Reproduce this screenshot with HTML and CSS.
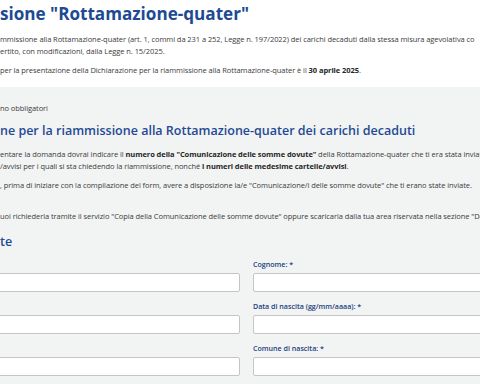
FILE: index.html
```html
<!DOCTYPE html>
<html lang="it">
<head>
    <meta charset="utf-8">
    <title>Dichiarazione di riammissione "Rottamazione-quater"</title>
    <meta name="viewport" content="width=device-width, initial-scale=1.0">
    <link rel="stylesheet" href="styles.css">
</head>
<body>
    <!-- intestazione -->
    <div class="intro">
        <h1 class="title">sione "Rottamazione-quater"</h1>
        <p class="text">mmissione alla Rottamazione-quater (art. 1, commi da 231 a 252, Legge n. 197/2022) dei carichi decaduti dalla stessa misura agevolativa co<br>ertito, con modificazioni, dalla Legge n. 15/2025.</p>
        <p class="text gap_s">per la presentazione della Dichiarazione per la riammissione alla Rottamazione-quater è il <strong>30 aprile 2025</strong>.</p>
    </div>

    <!-- modulo -->
    <div class="panel">
        <p class="text">no obbligatori</p>
        <h2 class="panel_title">ne per la riammissione alla Rottamazione-quater dei carichi decaduti</h2>
        <p class="text gap_m">entare la domanda dovrai indicare il <strong>numero della "Comunicazione delle somme dovute"</strong> della Rottamazione-quater che ti era stata inviata c<br>/avvisi per i quali si sta chiedendo la riammissione, nonché <strong>i numeri delle medesime cartelle/avvisi</strong>.</p>
        <p class="text gap_s">, prima di iniziare con la compilazione del form, avere a disposizione la/e "Comunicazione/i delle somme dovute" che ti erano state inviate.</p>
        <p class="text gap_l">uoi richiederla tramite il servizio "Copia della Comunicazione delle somme dovute" oppure scaricarla dalla tua area riservata nella sezione "Do</p>
        <h3 class="panel_title gap_h">te</h3>

        <form class="form_grid">
            <div class="field">
                <label for="nome">Nome: *</label>
                <input type="text" id="nome">
            </div>
            <div class="field">
                <label for="cognome">Cognome: *</label>
                <input type="text" id="cognome">
            </div>
            <div class="field">
                <label for="cf">Codice fiscale: *</label>
                <input type="text" id="cf">
            </div>
            <div class="field">
                <label for="data">Data di nascita (gg/mm/aaaa): *</label>
                <input type="text" id="data">
            </div>
            <div class="field">
                <label for="prov">Provincia di nascita: *</label>
                <input type="text" id="prov">
            </div>
            <div class="field">
                <label for="comune">Comune di nascita: *</label>
                <input type="text" id="comune">
            </div>
        </form>
    </div>
</body>
</html>
```
FILE: styles.css
```css
* {
    margin: 0;
    padding: 0;
    box-sizing: border-box;
}

html,
body {
    overflow: hidden;
}

body {
    width: 480px;
    height: 384px;
    font-family: "Open Sans", "Liberation Sans", sans-serif;
    font-size: 7.5px;
    line-height: 11.5px;
    letter-spacing: -0.07px;
    color: #3b3b3b;
    background: #fff;
}

.text {
    white-space: nowrap;
}

.text strong {
    font-weight: 700;
    color: #262626;
}

.intro {
    padding: 3px 0 10px;
}

.title {
    font-size: 17.1px;
    line-height: 22px;
    font-weight: 700;
    letter-spacing: 0;
    color: #1d4a93;
    white-space: nowrap;
    margin-bottom: 9px;
}

.gap_s {
    margin-top: 8px;
}

.gap_m {
    margin-top: 10px;
}

.gap_l {
    margin-top: 19px;
}

.gap_h {
    margin-top: 12px;
}

.panel {
    background: #f2f3f3;
    padding-top: 16px;
    min-height: 300px;
}

.panel_title {
    font-size: 12.5px;
    line-height: 16px;
    font-weight: 600;
    letter-spacing: 0;
    color: #1f4a94;
    white-space: nowrap;
}

h2.panel_title {
    margin-top: 9px;
}

/* due colonne, la prima esce a sinistra */
.form_grid {
    display: grid;
    grid-template-columns: 318px 318px;
    column-gap: 13px;
    row-gap: 9px;
    margin-left: -78px;
    margin-top: 9px;
}

.field label {
    display: block;
    font-size: 7.1px;
    line-height: 10px;
    font-weight: 600;
    letter-spacing: 0;
    color: #21427f;
    margin-bottom: 4px;
    white-space: nowrap;
}

.field input {
    display: block;
    width: 100%;
    height: 19px;
    border: 1px solid #c3c5c7;
    border-radius: 2px;
    background: #fff;
    font: inherit;
}
```
